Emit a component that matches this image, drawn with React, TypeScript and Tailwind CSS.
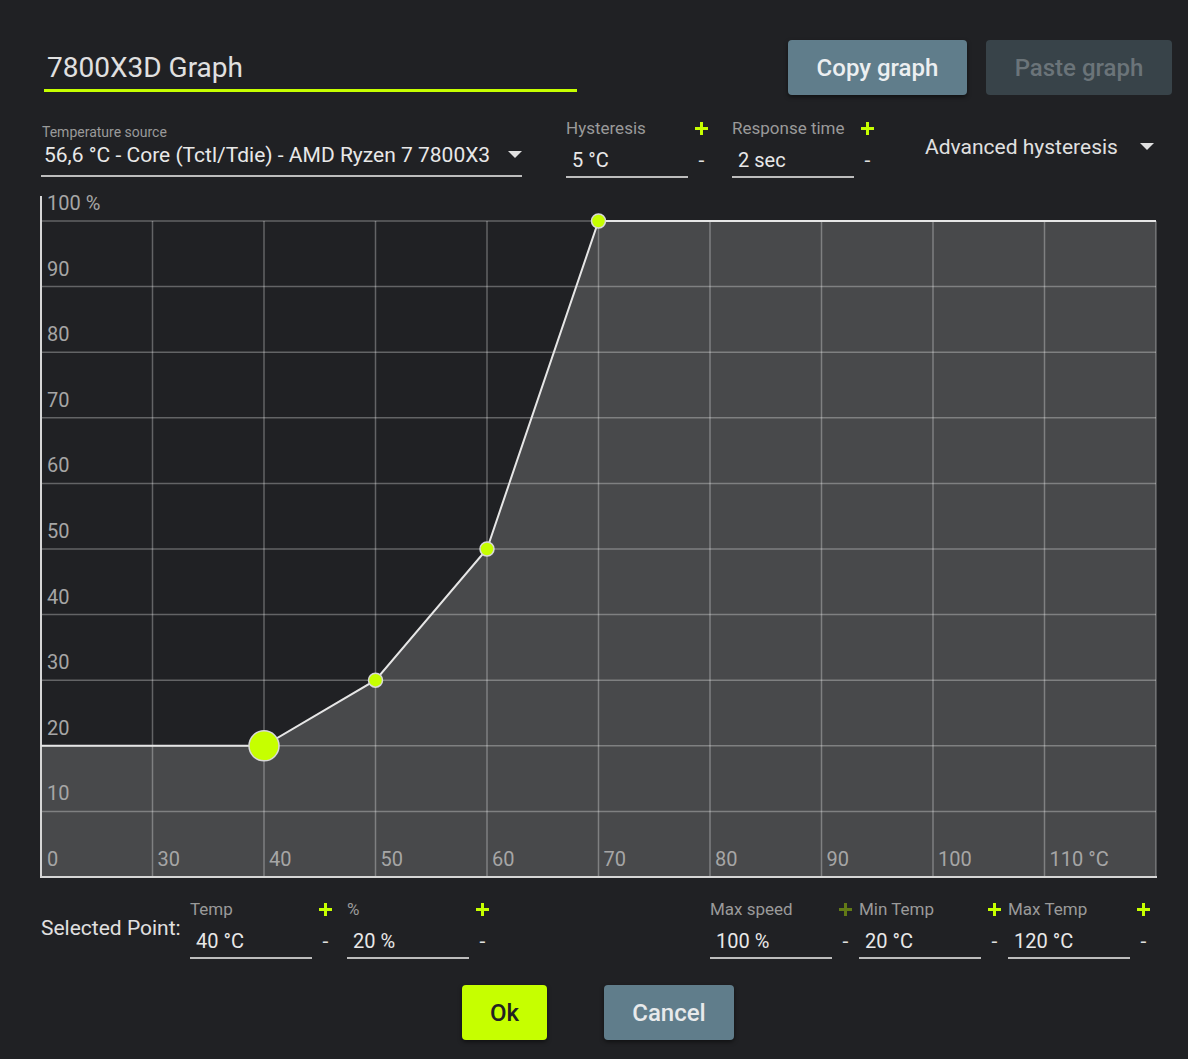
import React from "react";

const LIME = "#c6ff00";

const xAt = (i: number) => 41 + i * 111.5;
const yAt = (j: number) => 221 + j * 65.6;

const xLabels = ["0", "30", "40", "50", "60", "70", "80", "90", "100", "110 °C"];
const yLabels = ["90", "80", "70", "60", "50", "40", "30", "20", "10"];

// curve points as [col, row] on the grid
const points: [number, number][] = [
  [2, 8],
  [3, 7],
  [4, 5],
  [5, 0],
];

const Caret = ({ className = "" }: { className?: string }) => (
  <svg width="14" height="8" viewBox="0 0 14 8" className={className}>
    <polygon points="0,0 14,0 7,7" fill="#e0e0e0" />
  </svg>
);

const PlusMark = ({ dim = false }: { dim?: boolean }) => (
  <svg width="13" height="13" viewBox="0 0 13 13">
    <rect x="5" y="0" width="3" height="13" fill={dim ? "#627a16" : LIME} />
    <rect x="0" y="5" width="13" height="3" fill={dim ? "#627a16" : LIME} />
  </svg>
);

const Field = ({
  label,
  value,
  dim = false,
  className = "",
}: {
  label: string;
  value: string;
  dim?: boolean;
  className?: string;
}) => (
  <div className={`flex h-[64px] ${className}`}>
    <div className="flex w-[122px] flex-col">
      <div className="h-[26px] text-[17px] leading-[26px] text-[#9a9a9a]">{label}</div>
      <div className="mb-[4px] mt-[7px] pl-[6px] text-[20px] leading-[24px] text-[#e8e8e8]">{value}</div>
      <div className="h-[2px] bg-[#bdbdbd]" />
    </div>
    <div className="flex w-[27px] flex-col items-center">
      <div className="flex h-[26px] items-center">
        <PlusMark dim={dim} />
      </div>
      <div className="mt-[7px] text-[21px] leading-[24px] text-[#e0e0e0]">-</div>
    </div>
  </div>
);

const Chart = () => {
  const fill = [
    `41,877`,
    `41,${yAt(8)}`,
    ...points.map(([c, r]) => `${xAt(c)},${yAt(r)}`),
    `1156,221`,
    `1156,877`,
  ].join(" ");
  const line = [
    `41,${yAt(8)}`,
    ...points.map(([c, r]) => `${xAt(c)},${yAt(r)}`),
    `1156,221`,
  ].join(" ");

  return (
    <svg
      width="1130"
      height="690"
      viewBox="30 190 1130 690"
      className="ml-[30px] mt-[11px] block"
      fontFamily="Roboto, sans-serif"
    >
      <polygon points={fill} fill="#48494b" />

      {/* grid */}
      {Array.from({ length: 11 }).map((_, i) => (
        <line key={"v" + i} x1={xAt(i)} y1={221} x2={xAt(i)} y2={877} stroke="#ffffff" strokeOpacity="0.3" strokeWidth="1.5" />
      ))}
      {Array.from({ length: 11 }).map((_, j) => (
        <line key={"h" + j} x1={41} y1={yAt(j)} x2={1156} y2={yAt(j)} stroke="#ffffff" strokeOpacity="0.3" strokeWidth="1.5" />
      ))}

      {/* axes */}
      <line x1={41} y1={196} x2={41} y2={878} stroke="#d6d6d6" strokeWidth="2" />
      <line x1={40} y1={877} x2={1157} y2={877} stroke="#d6d6d6" strokeWidth="2" />

      {/* labels */}
      <text x={47} y={203} fontSize="20" fill="#a6a6a6" dominantBaseline="central">
        100 %
      </text>
      {yLabels.map((t, j) => (
        <text key={t} x={47} y={yAt(j + 1) - 18} fontSize="20" fill="#a6a6a6" dominantBaseline="central">
          {t}
        </text>
      ))}
      {xLabels.map((t, i) => (
        <text key={t} x={xAt(i) + (i === 0 ? 6 : 5)} y={859} fontSize="20" fill="#a6a6a6" dominantBaseline="central">
          {t}
        </text>
      ))}

      {/* curve */}
      <polyline points={line} fill="none" stroke="#e6e6e6" strokeWidth="2" />
      {points.map(([c, r], k) => (
        <circle
          key={k}
          cx={xAt(c)}
          cy={yAt(r)}
          r={k === 0 ? 15 : 7}
          fill={LIME}
          stroke="#d8d8d8"
          strokeWidth="1.5"
        />
      ))}
    </svg>
  );
};

const App = () => {
  return (
    <div className="h-[1059px] w-[1188px] overflow-hidden bg-[#202124] pt-[40px] font-['Roboto',sans-serif]">
      {/* Header */}
      <div className="flex h-[55px] items-start">
        <div className="ml-[44px] flex w-[533px] flex-col">
          <div className="mt-[10px] pl-[3px] text-[28px] leading-[36px] text-[#e0e0e0]">7800X3D Graph</div>
          <div className="mt-[3px] h-[3px] bg-[#c6ff00]" />
        </div>
        <div className="ml-auto mr-[16px] flex gap-[19px]">
          <button className="h-[55px] w-[179px] rounded-[4px] bg-[#607d8b] text-[24px] font-medium text-[#eceff1] shadow-[0_2px_4px_rgba(0,0,0,0.5)]">
            Copy graph
          </button>
          <button className="h-[55px] w-[186px] rounded-[4px] bg-[#384349] text-[24px] font-medium text-[#6b7479]">
            Paste graph
          </button>
        </div>
      </div>

      {/* Source + hysteresis */}
      <div className="mt-[20px] flex h-[64px] items-start">
        <div className="ml-[41px] flex w-[481px] flex-col">
          <div className="pl-[1px] pt-[8px] text-[14px] leading-[18px] text-[#9a9a9a]">Temperature source</div>
          <div className="mt-[1px] flex h-[26px] items-center">
            <div className="w-[451px] overflow-hidden whitespace-nowrap pl-[3px] text-[21px] leading-[26px] text-[#e8e8e8]">
              56,6 °C - Core (Tctl/Tdie) - AMD Ryzen 7 7800X3D
            </div>
            <Caret className="ml-[17px]" />
          </div>
          <div className="mt-[7px] h-[2px] bg-[#bdbdbd]" />
        </div>
        <Field label="Hysteresis" value="5 °C" className="ml-[44px]" />
        <Field label="Response time" value="2 sec" className="ml-[17px]" />
        <div className="ml-[44px] mt-[20px] flex items-center">
          <span className="text-[21px] leading-[24px] text-[#e0e0e0]">Advanced hysteresis</span>
          <Caret className="ml-[22px]" />
        </div>
      </div>

      {/* Graph */}
      <Chart />

      {/* Selected point */}
      <div className="mt-[16px] flex h-[64px] items-start">
        <div className="ml-[41px] mt-[20px] w-[149px] text-[21px] leading-[24px] text-[#e0e0e0]">Selected Point:</div>
        <Field label="Temp" value="40 °C" />
        <Field label="%" value="20 %" className="ml-[8px]" />
        <Field label="Max speed" value="100 %" dim className="ml-[214px]" />
        <Field label="Min Temp" value="20 °C" />
        <Field label="Max Temp" value="120 °C" />
      </div>

      {/* Actions */}
      <div className="mt-[25px] flex">
        <button className="ml-[462px] h-[55px] w-[85px] rounded-[4px] bg-[#c6ff00] text-[24px] font-medium text-[#222222] shadow-[0_2px_4px_rgba(0,0,0,0.5)]">
          Ok
        </button>
        <button className="ml-[57px] h-[55px] w-[130px] rounded-[4px] bg-[#607d8b] text-[24px] font-medium text-[#e8eaeb] shadow-[0_2px_4px_rgba(0,0,0,0.5)]">
          Cancel
        </button>
      </div>
    </div>
  );
};

export default App;
